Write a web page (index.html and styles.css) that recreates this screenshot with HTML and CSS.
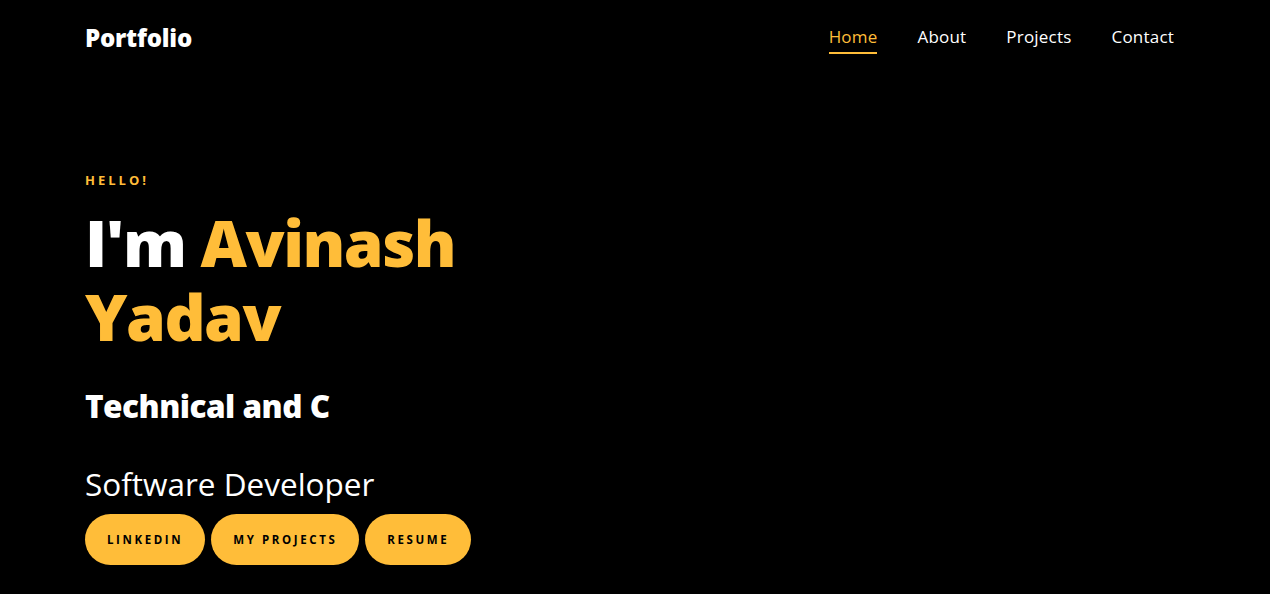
FILE: index.html
```html
<!DOCTYPE html>
<html lang="en">
<head>
<meta charset="utf-8">
<title>Portfolio</title>
<link rel="stylesheet" href="styles.css">
</head>
<body>
<header class="topbar">
  <a class="brand" href="#">Portfolio</a>
  <nav class="nav">
    <a class="nav-link active" href="#">Home</a>
    <a class="nav-link" href="#">About</a>
    <a class="nav-link" href="#">Projects</a>
    <a class="nav-link" href="#">Contact</a>
  </nav>
</header>
<main class="hero">
  <p class="hello">HELLO!</p>
  <h1 class="name"><span class="line">I'm <span class="accent">Avinash</span></span><span class="line accent">Yadav</span></h1>
  <h2 class="tagline">Technical and C</h2>
  <p class="role">Software Developer</p>
  <div class="actions">
    <a class="btn" href="#">LINKEDIN</a>
    <a class="btn" href="#">MY PROJECTS</a>
    <a class="btn" href="#">RESUME</a>
  </div>
</main>
</body>
</html>
```
FILE: styles.css
```css
* { box-sizing: border-box; }
body {
  margin: 0;
  background: #000;
  color: #fff;
  font-family: "Open Sans", "DejaVu Sans", sans-serif;
  height: 594px;
  overflow: hidden;
}
a { text-decoration: none; color: inherit; }
.topbar {
  display: flex;
  align-items: flex-start;
  justify-content: space-between;
  padding: 24px 96px 0 85px;
  height: 60px;
}
.brand {
  font-weight: 800;
  font-size: 24px;
  letter-spacing: -0.2px;
  color: #fff;
  line-height: 28px;
}
.nav {
  display: flex;
  gap: 40px;
  align-items: flex-start;
  margin-top: 3px;
}
.nav-link {
  font-size: 17px;
  line-height: 20px;
  color: #fff;
  padding-bottom: 5px;
  border-bottom: 2px solid transparent;
  letter-spacing: 0.2px;
}
.nav-link.active {
  color: #ffbd39;
  border-bottom-color: #ffbd39;
}
.hero {
  padding: 112px 85px 0;
}
.hello {
  margin: 0;
  color: #ffbd39;
  font-weight: 700;
  font-size: 13px;
  letter-spacing: 3px;
  line-height: 16px;
}
.name {
  margin: 18px 0 0;
  font-size: 64px;
  font-weight: 800;
  line-height: 74px;
  letter-spacing: -1.5px;
  display: flex;
  flex-direction: column;
}
.line { display: block; height: 74px; }
.accent { color: #ffbd39; }
.tagline {
  margin: 32px 0 0;
  font-size: 31.5px;
  font-weight: 800;
  line-height: 40px;
  letter-spacing: -0.5px;
}
.role {
  margin: 38px 0 0;
  font-size: 31.5px;
  font-weight: 400;
  line-height: 40px;
}
.actions {
  display: flex;
  gap: 6px;
  margin-top: 10px;
}
.btn {
  display: flex;
  align-items: center;
  justify-content: center;
  height: 51px;
  padding: 0 22px;
  border-radius: 26px;
  background: #ffbd39;
  color: #000;
  font-size: 11.5px;
  font-weight: 700;
  letter-spacing: 2.6px;
}
```
